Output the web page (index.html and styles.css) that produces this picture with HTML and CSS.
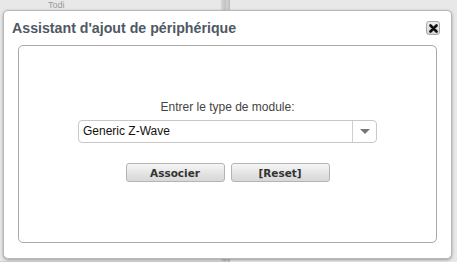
FILE: index.html
```html
<!DOCTYPE html>
<html lang="fr">
<head>
  <meta charset="UTF-8" />
  <title>Assistant d'ajout de périphérique</title>
  <link rel="stylesheet" href="styles.css">
</head>
<body>
  <div class="page">
    <div class="pane left"><span class="ghost">Todi</span></div>
    <div class="splitter"></div>
    <div class="pane right"></div>
  </div>

  <div class="dialog">
    <div class="dialog-head">
      <h1>Assistant d'ajout de périphérique</h1>
      <button class="close" title="Fermer">
        <svg width="9" height="9" viewBox="0 0 9 9">
          <path d="M1.5 1.5 L7.5 7.5 M7.5 1.5 L1.5 7.5" stroke="#111" stroke-width="2.6" stroke-linecap="round"/>
        </svg>
      </button>
    </div>
    <div class="panel">
      <label class="field-label" for="moduleType">Entrer le type de module:</label>
      <div class="select">
        <span id="moduleType" class="select-value">Generic Z-Wave</span>
        <span class="select-arrow"></span>
      </div>
      <div class="actions">
        <button class="btn">Associer</button>
        <button class="btn">[Reset]</button>
      </div>
    </div>
  </div>
</body>
</html>
```

FILE: styles.css
```css
body {
  margin: 0;
  background: #e6e6e6;
  font-family: 'Liberation Sans', Arial, sans-serif;
  overflow: hidden;
}
.page {
  display: flex;
  height: 262px;
}
.pane {
  background: #e8e8e8;
}
.pane.left {
  width: 221px;
  border-bottom: 1px solid #d0d0d0;
}
.pane.right {
  flex: 1;
}
.ghost {
  display: block;
  margin: 1px 0 0 48px;
  font-size: 9px;
  line-height: 9px;
  color: #999;
}
.splitter {
  width: 9px;
  background: linear-gradient(to right, #d8d8d8, #c4c4c4 40%, #d0d0d0 70%, #bdbdbd);
}
.dialog {
  position: absolute;
  left: 3px;
  top: 10px;
  width: 447px;
  height: 247px;
  background: #fff;
  border: 1px solid #b8b8b8;
  border-radius: 5px;
  box-shadow: 0 1px 3px rgba(0, 0, 0, 0.35);
  display: flex;
  flex-direction: column;
}
.dialog-head {
  display: flex;
  align-items: center;
  justify-content: space-between;
  height: 34px;
  padding: 0 11px 0 8px;
}
.dialog-head h1 {
  margin: 0;
  font-size: 14.2px;
  font-weight: bold;
  color: #4f5864;
}
.close {
  width: 14px;
  height: 14px;
  padding: 0;
  border: 1px solid #a8a8a8;
  border-radius: 3px;
  background: linear-gradient(#eeeeee, #d6d6d6);
  display: flex;
  align-items: center;
  justify-content: center;
}
.panel {
  flex: 1;
  margin: 0 14px 15px 14px;
  border: 1px solid #a9a9a9;
  border-radius: 5px;
  display: flex;
  flex-direction: column;
  align-items: center;
  padding-top: 54px;
}
.field-label {
  font-size: 12px;
  color: #444;
  line-height: 14px;
}
.select {
  margin-top: 6px;
  width: 297px;
  height: 21px;
  border: 1px solid #c8c8c8;
  border-radius: 4px;
  display: flex;
  background: #fff;
}
.select-value {
  flex: 1;
  padding-left: 4px;
  font-size: 12px;
  line-height: 21px;
  color: #111;
}
.select-arrow {
  width: 23px;
  border-left: 1px solid #cfcfcf;
  display: flex;
  align-items: center;
  justify-content: center;
}
.select-arrow::after {
  content: "";
  border-left: 5px solid transparent;
  border-right: 5px solid transparent;
  border-top: 5px solid #777;
}
.actions {
  margin-top: 20px;
  display: flex;
  gap: 6px;
}
.btn {
  width: 99px;
  height: 19px;
  padding: 0;
  border: 1px solid #b4b4b4;
  border-radius: 3px;
  background: linear-gradient(#f6f6f6, #e2e2e2 60%, #d8d8d8);
  font-family: 'DejaVu Sans', Verdana, sans-serif;
  font-size: 10.5px;
  font-weight: bold;
  color: #333;
}
```
